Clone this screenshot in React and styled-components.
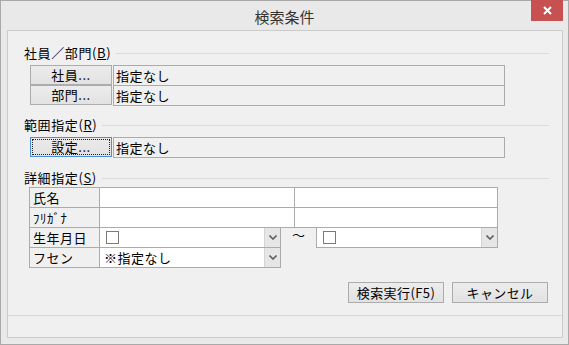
import React from "react";
import styled, { createGlobalStyle } from "styled-components";

const Global = createGlobalStyle`
  html, body { margin: 0; padding: 0; background: #ffffff; }
  body { font-family: "Noto Sans CJK JP", "Noto Sans", sans-serif; }
  * { box-sizing: border-box; }
`;

const Window = styled.div`
  width: 569px;
  height: 345px;
  border: 1px solid #a9a9a9;
  background: #e9e9e9;
  display: flex;
  flex-direction: column;
  font-family: "Noto Sans CJK JP", "Noto Sans", sans-serif;
  font-size: 13px;
  color: #000;
`;

const TitleBar = styled.div`
  position: relative;
  height: 29px;
  flex: none;
  display: flex;
  align-items: center;
  justify-content: center;
`;

const Title = styled.span`
  font-size: 15px;
  line-height: 16px;
  color: #333;
  padding-top: 2px;
`;

const CloseButton = styled.div`
  position: absolute;
  top: -1px;
  right: 5px;
  width: 32px;
  height: 21px;
  background: #c75050;
  display: flex;
  align-items: center;
  justify-content: center;
`;

const Client = styled.div`
  flex: 1;
  margin: 0 5px 6px 6px;
  border: 1px solid #cbcbcb;
  background: #f0f0f0;
  display: flex;
  flex-direction: column;
`;

const Content = styled.div`
  flex: 1;
  display: flex;
  flex-direction: column;
  padding: 15px 13px 0 16px;
`;

const Header = styled.div`
  display: flex;
  align-items: center;
  height: 14px;
  margin-top: ${(p) => p.$top || 0}px;
  gap: 5px;
`;

const HeaderText = styled.span`
  line-height: 14px;
  letter-spacing: 0.6px;
  white-space: nowrap;
  u { text-decoration: underline; }
`;

const HeaderLine = styled.div`
  flex: 1;
  height: 1px;
  background: #dadada;
`;

const PickerGroup = styled.div`
  display: flex;
  flex-direction: column;
  margin: ${(p) => p.$top || 0}px 0 0 6px;
  width: 475px;
`;

const PickerRow = styled.div`
  display: flex;
  align-items: flex-start;
  height: 21px;
  & + & { margin-top: -1px; }
`;

const PickButton = styled.div`
  width: 82px;
  height: 20px;
  flex: none;
  border: 1px solid ${(p) => (p.$focused ? "#4a90d9" : "#acacac")};
  background: ${(p) =>
    p.$focused
      ? "linear-gradient(#eaeaea, #e2e2e2)"
      : "linear-gradient(#ececec, #e2e2e2)"};
  display: flex;
  align-items: center;
  justify-content: center;
  padding: ${(p) => (p.$focused ? "1px" : "0")};
`;

const FocusRing = styled.div`
  width: 100%;
  height: 100%;
  border: 1px dotted #222;
  display: flex;
  align-items: center;
  justify-content: center;
`;

const ButtonLabel = styled.span`
  line-height: 14px;
  letter-spacing: 0.5px;
`;

const ValueBox = styled.div`
  width: 392px;
  height: 21px;
  margin-left: 1px;
  border: 1px solid #ababab;
  display: flex;
  align-items: center;
  padding-left: 2px;
  line-height: 14px;
  letter-spacing: 0.5px;
`;

const Table = styled.div`
  display: flex;
  flex-direction: column;
  margin: ${(p) => p.$top || 0}px 0 0 5px;
`;

const TableRow = styled.div`
  display: flex;
  align-items: center;
  height: 21px;
  & + & { margin-top: -1px; }
`;

const LabelCell = styled.div`
  width: 71px;
  height: 21px;
  flex: none;
  border: 1px solid #ababab;
  background: #f0f0f0;
  display: flex;
  align-items: center;
  padding-left: 3px;
  line-height: 14px;
  letter-spacing: 0.5px;
`;

const InputCell = styled.div`
  width: ${(p) => p.$w}px;
  height: 21px;
  flex: none;
  margin-left: -1px;
  border: 1px solid #ababab;
  background: #fff;
`;

const Combo = styled.div`
  width: 182px;
  height: 21px;
  flex: none;
  margin-left: ${(p) => (p.$first ? -1 : 0)}px;
  border: 1px solid #ababab;
  background: #fff;
  display: flex;
  align-items: center;
`;

const ComboText = styled.div`
  flex: 1;
  display: flex;
  align-items: center;
  padding-left: ${(p) => (p.$check ? 6 : 4)}px;
  line-height: 14px;
  letter-spacing: 0.5px;
`;

const CheckBox = styled.div`
  width: 13px;
  height: 13px;
  border: 1px solid #7a7a7a;
  background: #fff;
`;

const DropButton = styled.div`
  width: 16px;
  height: 19px;
  flex: none;
  margin-right: 0;
  background: #e6e6e6;
  border-left: 1px solid #d4d4d4;
  display: flex;
  align-items: center;
  justify-content: center;
`;

const Tilde = styled.div`
  width: 35px;
  flex: none;
  display: flex;
  justify-content: center;
  align-self: flex-start;
  padding-top: 1px;
  line-height: 14px;
  font-size: 13px;
`;

const Footer = styled.div`
  display: flex;
  justify-content: flex-end;
  gap: 8px;
  margin-top: 14px;
  padding-right: 1px;
`;

const ActionButton = styled.div`
  width: 96px;
  height: 21px;
  border: 1px solid #acacac;
  background: linear-gradient(#ececec, #e2e2e2);
  display: flex;
  align-items: center;
  justify-content: center;
  line-height: 14px;
  letter-spacing: 0.4px;
`;

const StatusBar = styled.div`
  height: 22px;
  flex: none;
  border-top: 1px solid #d6d6d6;
`;

const Chevron = () => (
  <svg width="8" height="5" viewBox="0 0 8 5">
    <path d="M0.5 0.5 L4 4 L7.5 0.5" fill="none" stroke="#606060" strokeWidth="1.6" />
  </svg>
);

const CloseIcon = () => (
  <svg width="9" height="9" viewBox="0 0 9 9">
    <path d="M1 1 L8 8 M8 1 L1 8" stroke="#fff" strokeWidth="2" />
  </svg>
);

export default function App() {
  return (
    <>
      <Global />
      <Window>
        <TitleBar>
          <Title>検索条件</Title>
          <CloseButton>
            <CloseIcon />
          </CloseButton>
        </TitleBar>
        <Client>
          <Content>
            <Header>
              <HeaderText>
                社員／部門(<u>B</u>)
              </HeaderText>
              <HeaderLine />
            </Header>
            <PickerGroup $top={5}>
              <PickerRow>
                <PickButton>
                  <ButtonLabel>社員...</ButtonLabel>
                </PickButton>
                <ValueBox>指定なし</ValueBox>
              </PickerRow>
              <PickerRow>
                <PickButton>
                  <ButtonLabel>部門...</ButtonLabel>
                </PickButton>
                <ValueBox>指定なし</ValueBox>
              </PickerRow>
            </PickerGroup>

            <Header $top={12}>
              <HeaderText>
                範囲指定(<u>R</u>)
              </HeaderText>
              <HeaderLine />
            </Header>
            <PickerGroup $top={5}>
              <PickerRow>
                <PickButton $focused>
                  <FocusRing>
                    <ButtonLabel>設定...</ButtonLabel>
                  </FocusRing>
                </PickButton>
                <ValueBox>指定なし</ValueBox>
              </PickerRow>
            </PickerGroup>

            <Header $top={13}>
              <HeaderText>
                詳細指定(<u>S</u>)
              </HeaderText>
              <HeaderLine />
            </Header>
            <Table $top={2}>
              <TableRow>
                <LabelCell>氏名</LabelCell>
                <InputCell $w={196} />
                <InputCell $w={204} />
              </TableRow>
              <TableRow>
                <LabelCell>ﾌﾘｶﾞﾅ</LabelCell>
                <InputCell $w={196} />
                <InputCell $w={204} />
              </TableRow>
              <TableRow>
                <LabelCell>生年月日</LabelCell>
                <Combo $first>
                  <ComboText $check>
                    <CheckBox />
                  </ComboText>
                  <DropButton>
                    <Chevron />
                  </DropButton>
                </Combo>
                <Tilde>～</Tilde>
                <Combo>
                  <ComboText $check>
                    <CheckBox />
                  </ComboText>
                  <DropButton>
                    <Chevron />
                  </DropButton>
                </Combo>
              </TableRow>
              <TableRow>
                <LabelCell>フセン</LabelCell>
                <Combo $first>
                  <ComboText>※指定なし</ComboText>
                  <DropButton>
                    <Chevron />
                  </DropButton>
                </Combo>
              </TableRow>
            </Table>

            <Footer>
              <ActionButton>検索実行(F5)</ActionButton>
              <ActionButton>キャンセル</ActionButton>
            </Footer>
          </Content>
          <StatusBar />
        </Client>
      </Window>
    </>
  );
}
